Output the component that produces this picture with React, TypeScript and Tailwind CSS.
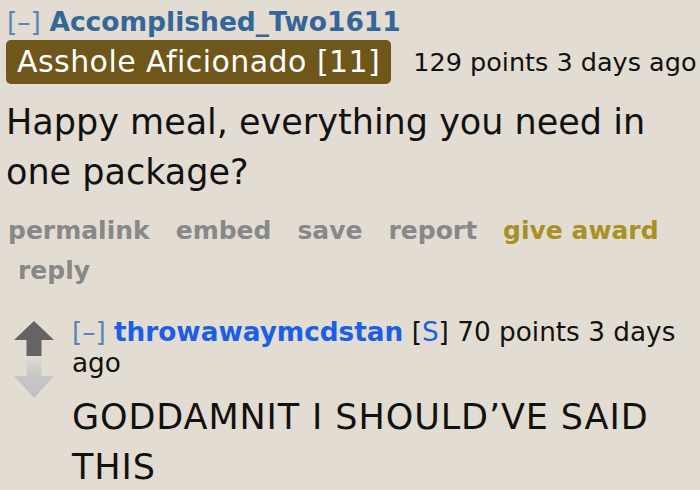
import React from "react";

function UpArrow() {
  return (
    <svg width="40" height="35" viewBox="0 0 40 35" className="block">
      <polygon points="20,0 40,19 27.5,19 27.5,35 12.5,35 12.5,19 0,19" fill="#646464" />
    </svg>
  );
}

function DownArrow() {
  return (
    <svg width="40" height="39" viewBox="0 0 40 39" className="block">
      <defs>
        <linearGradient id="dg" x1="0" y1="0" x2="0" y2="1">
          <stop offset="0" stopColor="#dcd8d2" />
          <stop offset="0.45" stopColor="#c6c6c6" />
          <stop offset="1" stopColor="#bfbfbf" />
        </linearGradient>
      </defs>
      <polygon points="12.5,0 27.5,0 27.5,17 40,17 20,39 0,17 12.5,17" fill="url(#dg)" />
    </svg>
  );
}

export default function App() {
  return (
    <div className="w-[700px] h-[490px] overflow-hidden bg-[#e3dcd2] text-[#111] font-['DejaVu_Sans',Verdana,sans-serif]">
      <div className="pl-[7px] pt-[7px] text-[26.5px] leading-[30px] whitespace-nowrap">
        <span className="text-[#5a84b8]">[–]</span>{" "}
        <span className="font-bold text-[#336699]">Accomplished_Two1611</span>
      </div>
      <div className="flex items-center pl-[6px] mt-[3px]">
        <span className="bg-[#6f561a] text-white rounded-[5px] px-[11px] h-[44px] flex items-center text-[30px] tracking-[0.45px] leading-none whitespace-nowrap">
          Asshole Aficionado [11]
        </span>
        <span className="ml-[22px] text-[25.5px] whitespace-nowrap">129 points 3 days ago</span>
      </div>
      <div className="pl-[6px] mt-[13px] text-[35px] leading-[50px]">
        Happy meal, everything you need in
        <br />
        one package?
      </div>
      <div className="mt-[14px] pl-[8px] pr-[30px] flex flex-wrap gap-x-[26px] font-bold text-[25px] leading-[40px] text-[#888888]">
        <span>permalink</span>
        <span>embed</span>
        <span>save</span>
        <span>report</span>
        <span className="text-[#a89124]">give award</span>
        <span className="ml-[10px]">reply</span>
      </div>
      <div className="flex mt-[26px]">
        <div className="w-[72px] pl-[14px] pt-[4px] flex flex-col gap-[3px] shrink-0">
          <UpArrow />
          <DownArrow />
        </div>
        <div className="flex-1 pr-[10px]">
          <div className="text-[26.3px] leading-[31px]">
            <span className="text-[#5a84b8]">[–]</span>{" "}
            <span className="font-bold text-[#1a5fe6]">throwawaymcdstan</span>{" "}
            <span>
              [<span className="text-[#1a5fe6]">S</span>]
            </span>{" "}
            70 points 3 days ago
          </div>
          <div className="mt-[13px] text-[35px] tracking-[0.9px] leading-[50px]">
            GODDAMNIT I SHOULD’VE SAID THIS
          </div>
        </div>
      </div>
    </div>
  );
}
